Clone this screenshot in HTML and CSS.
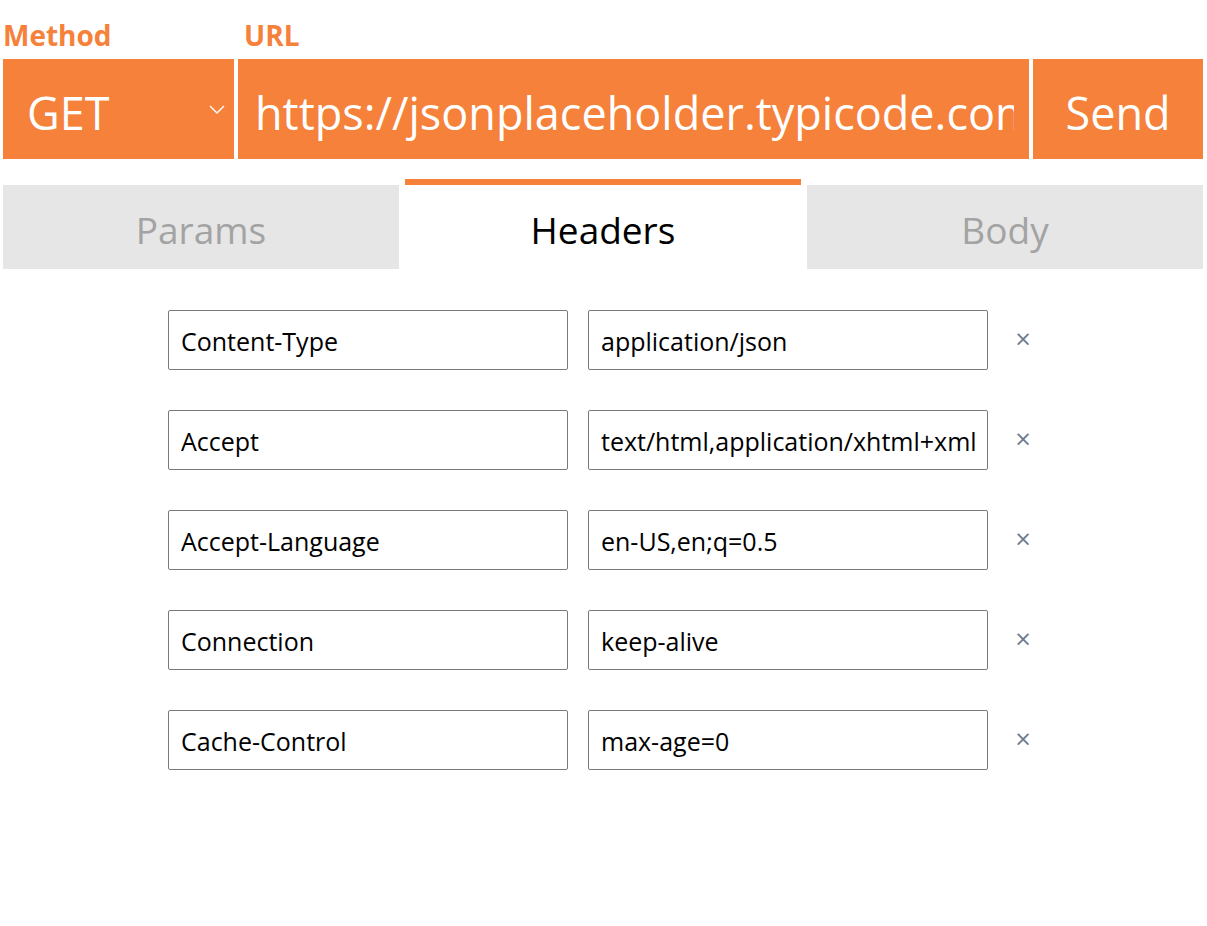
FILE: index.html
```html
<!DOCTYPE html>
<html lang="en">
<head>
<meta charset="utf-8">
<title>Request</title>
<link rel="stylesheet" href="styles.css">
</head>
<body>
<div class="app">
  <div class="labels">
    <div class="label label-method">Method</div>
    <div class="label label-url">URL</div>
  </div>
  <div class="request-bar">
    <div class="method">
      <span class="method-text">GET</span>
      <svg class="chevron" width="16" height="9" viewBox="0 0 16 9"><path d="M1 1 L8 8 L15 1" fill="none" stroke="#fff" stroke-width="1.4"/></svg>
    </div>
    <div class="url"><div class="clip">https://jsonplaceholder.typicode.com/posts/1</div></div>
    <div class="send">Send</div>
  </div>
  <div class="tabs">
    <div class="tab">Params</div>
    <div class="tab tab-active">Headers</div>
    <div class="tab">Body</div>
  </div>
  <div class="headers">
    <div class="row">
      <div class="field"><div class="clip">Content-Type</div></div>
      <div class="field"><div class="clip">application/json</div></div>
      <div class="remove">×</div>
    </div>
    <div class="row">
      <div class="field"><div class="clip">Accept</div></div>
      <div class="field"><div class="clip">text/html,application/xhtml+xml,application/xml;q=0.9</div></div>
      <div class="remove">×</div>
    </div>
    <div class="row">
      <div class="field"><div class="clip">Accept-Language</div></div>
      <div class="field"><div class="clip">en-US,en;q=0.5</div></div>
      <div class="remove">×</div>
    </div>
    <div class="row">
      <div class="field"><div class="clip">Connection</div></div>
      <div class="field"><div class="clip">keep-alive</div></div>
      <div class="remove">×</div>
    </div>
    <div class="row">
      <div class="field"><div class="clip">Cache-Control</div></div>
      <div class="field"><div class="clip">max-age=0</div></div>
      <div class="remove">×</div>
    </div>
  </div>
</div>
</body>
</html>
```

FILE: styles.css
```css
* { box-sizing: border-box; }
html, body { margin: 0; padding: 0; background: #fff; }
body {
  font-family: "Open Sans", "Noto Sans", sans-serif;
  color: #000;
}
.app {
  width: 1207px;
  padding: 0 4px 0 3px;
}
.labels {
  display: flex;
  height: 59px;
  align-items: flex-end;
  padding-bottom: 9px;
}
.label {
  color: #f5813b;
  font-weight: 700;
  font-size: 28px;
  line-height: 30px;
}
.label-method { width: 235px; padding-left: 0; }
.label-url { padding-left: 6px; }
.request-bar {
  display: flex;
  gap: 4px;
  height: 100px;
}
.method, .url, .send {
  background: #f5813b;
  color: #fff;
  font-size: 45px;
  display: flex;
  align-items: center;
  white-space: nowrap;
  overflow: hidden;
  padding-top: 6px;
}
.method {
  width: 231px;
  padding-left: 24px;
  padding-right: 9px;
  justify-content: space-between;
}
.chevron { display: block; margin-top: -6px; }
.url {
  flex: 1;
  min-width: 0;
  padding-left: 17px;
  padding-right: 15px;
}
.clip {
  flex: 1;
  min-width: 0;
  overflow: hidden;
  white-space: nowrap;
}
.send {
  width: 170px;
  justify-content: center;
}
.tabs {
  display: flex;
  gap: 6px;
  margin-top: 20px;
  height: 90px;
}
.tab {
  flex: 1;
  margin-top: 6px;
  background: #e6e6e6;
  color: #a3a3a3;
  font-size: 37px;
  display: flex;
  align-items: center;
  justify-content: center;
  padding-top: 4px;
}
.tab-active {
  margin-top: 0;
  background: #fff;
  color: #000;
  border-top: 6px solid #f5813b;
}
.headers {
  display: flex;
  flex-direction: column;
  gap: 40px;
  padding: 41px 0 0 165px;
}
.row {
  display: flex;
  align-items: center;
  gap: 20px;
  height: 60px;
}
.field {
  width: 400px;
  height: 60px;
  border: 1px solid #7a7a7a;
  border-radius: 2px;
  padding: 2px 12px 0 12px;
  font-size: 25px;
  display: flex;
  align-items: center;
}
.remove {
  width: 30px;
  color: #6b7a90;
  font-size: 21px;
  font-family: "DejaVu Sans", sans-serif;
  line-height: 1;
  text-align: center;
  margin-top: -1px;
}
```
